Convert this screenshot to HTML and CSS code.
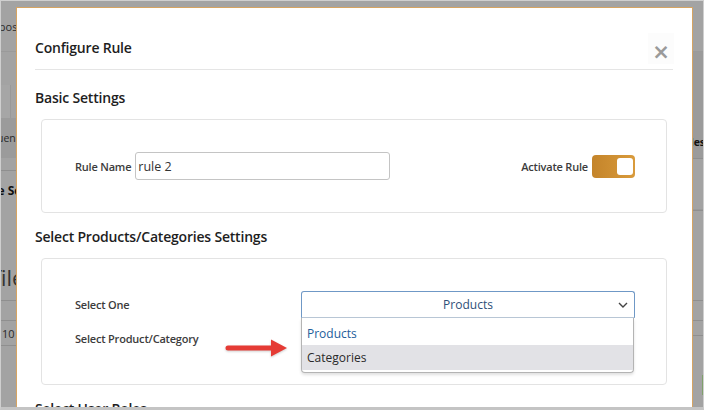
FILE: index.html
```html
<!DOCTYPE html>
<html lang="en">
<head>
<meta charset="utf-8">
<title>Configure Rule</title>
<link rel="stylesheet" href="styles.css">
</head>
<body>
<div class="page">
  <div class="strip strip-left">
    <div class="bg-row h52"><span class="t-purpose">Purpose</span></div>
    <div class="bg-row h33"></div>
    <div class="bg-row h33 split"></div>
    <div class="bg-row h40 dark"><span class="t-freq">Frequency</span></div>
    <div class="bg-row h12"></div>
    <div class="bg-row h40 lined"><b class="t-rule">Rule Settings</b></div>
    <div class="bg-row h90 big"><span class="t-profile">Profile</span></div>
    <div class="bg-row h20 lined"></div>
    <div class="bg-row h25 lined"><span class="t-ten">10</span></div>
    <div class="bg-row h30 lined"></div>
  </div>
  <div class="page-main"></div>
  <div class="strip strip-right">
    <div class="bg-row h52"></div>
    <div class="bg-row h73 dark"></div>
    <div class="bg-row h33 dark"><b class="t-roles">Roles</b></div>
    <div class="bg-row h52 lined"></div>
    <div class="bg-row h90 lined"></div>
    <div class="bg-row h20 lined"></div>
    <div class="bg-row h15 lined"></div>
    <div class="bg-row h40 lined"></div>
    <div class="bg-row h20 green"></div>
  </div>
</div>

<div class="modal">
  <div class="modal-header">
    <h2 class="modal-title">Configure Rule</h2>
    <span class="close">&times;</span>
  </div>

  <h3 class="section-title">Basic Settings</h3>
  <div class="card">
    <div class="basic-row">
      <div class="field">
        <label class="lbl">Rule Name</label>
        <input class="text-input" type="text" value="rule 2">
      </div>
      <div class="field">
        <label class="lbl">Activate Rule</label>
        <span class="toggle"><span class="knob"></span></span>
      </div>
    </div>
  </div>

  <h3 class="section-title">Select Products/Categories Settings</h3>
  <div class="card card-select">
    <div class="form-grid">
      <label class="lbl">Select One</label>
      <div class="select-wrap">
        <div class="select">
          <span class="select-value">Products</span>
          <svg class="chevron" width="10" height="6" viewBox="0 0 10 6"><path d="M1 1 L5 5 L9 1" fill="none" stroke="#444" stroke-width="1.4"/></svg>
        </div>
        <ul class="dropdown">
          <li class="opt opt-selected">Products</li>
          <li class="opt opt-hover">Categories</li>
        </ul>
      </div>
      <label class="lbl">Select Product/Category</label>
      <div class="select-spacer"></div>
    </div>
    <svg class="arrow" width="64" height="20" viewBox="0 0 64 20">
      <path d="M3 7.5 H46 V1.5 L62 10 L46 18.5 V12.5 H3 A2.5 2.5 0 0 1 3 7.5 Z" fill="#e53b35"/>
    </svg>
  </div>

  <h3 class="section-title">Select User Roles</h3>
</div>

<div class="frame"></div>
</body>
</html>
```

FILE: styles.css
```css
* { box-sizing: border-box; }

html, body {
  margin: 0;
  padding: 0;
  width: 704px;
  height: 410px;
  overflow: hidden;
}

body {
  position: relative;
  background: #a3a3a3;
  font-family: "Open Sans", "Noto Sans", sans-serif;
  color: #222;
}

/* dimmed page behind the modal */
.page {
  display: flex;
  height: 410px;
}

.strip {
  display: flex;
  flex-direction: column;
}

.strip-left { width: 16px; }
.strip-right { width: 12px; margin-left: auto; }
.page-main { flex: 1; }

.bg-row {
  display: flex;
  align-items: center;
  white-space: nowrap;
  font-size: 11px;
  color: #2a2a2a;
}

.t-purpose { margin-left: -19px; margin-top: 2px; }
.t-freq { margin-left: -25px; font-size: 10.5px; }
.t-rule { margin-left: -22px; font-size: 12px; }
.t-profile { margin-left: -42px; }
.t-ten { margin-left: 2px; }
.t-roles { margin-left: -15px; font-size: 10.5px; font-weight: 600; }

.h52 { height: 52px; border-bottom: 1px solid #9a9a9a; }
.h33 { height: 33px; }
.h40 { height: 40px; }
.h12 { height: 12px; }
.h90 { height: 90px; }
.h20 { height: 20px; }
.h25 { height: 25px; }
.h30 { height: 30px; }
.h73 { height: 73px; }
.h15 { height: 15px; }

.split { border-right: 1px solid #999; margin-right: 5px; background: #a6a6a6; }
.dark { background: #9b9b9b; }
.lined { border-top: 1px solid #8f8f8f; }
.big { font-size: 22px; align-items: flex-end; padding-bottom: 8px; color: #333; }
.bg-row b { font-weight: 700; color: #111; }
.green { border-right: 2px solid #7fa06b; }

/* modal */
.modal {
  position: absolute;
  left: 16px;
  top: 7px;
  width: 677px;
  height: 420px;
  background: #fff;
  border: 1px solid #d6a462;
  padding: 0 19px 0 18px;
  z-index: 1;
}

.modal-header {
  display: flex;
  align-items: center;
  justify-content: space-between;
  height: 62px;
  padding-top: 18px;
  border-bottom: 1px solid #e5e5e5;
}

.modal-title {
  margin: 0;
  font-size: 14px;
  letter-spacing: -0.2px;
  font-weight: 600;
  line-height: 20px;
  color: #1e1e1e;
}

.close {
  display: flex;
  align-items: center;
  justify-content: center;
  width: 26px;
  height: 31px;
  margin-right: -1px;
  margin-top: 1px;
  padding-top: 8px;
  background: #fcfcfc;
  color: #9a9a9a;
  font-size: 21px;
  font-weight: 600;
  line-height: 1;
  font-family: "DejaVu Sans", sans-serif;
}

.section-title {
  margin: 18px 0 11px;
  font-size: 14px;
  letter-spacing: -0.2px;
  font-weight: 600;
  line-height: 20px;
  color: #1e1e1e;
}

.card {
  position: relative;
  margin: 0 6px;
  border: 1px solid #e3e3e3;
  border-radius: 4px;
  padding: 32px 31px 32px 33px;
}

.card + .section-title { margin-top: 14px; }

.basic-row {
  display: flex;
  align-items: center;
  justify-content: space-between;
  height: 28px;
}

.field {
  display: flex;
  align-items: center;
  gap: 4px;
}

.lbl {
  font-size: 11px;
  letter-spacing: -0.2px;
  font-weight: 600;
  color: #3c3c3c;
  white-space: nowrap;
}

.text-input {
  width: 255px;
  height: 28px;
  border: 1px solid #c4c4c4;
  border-radius: 3px;
  padding: 0 2px;
  font-family: "Open Sans", "Noto Sans", sans-serif;
  font-size: 12.5px;
  color: #333;
  outline: none;
}

.toggle {
  display: flex;
  align-items: center;
  justify-content: flex-end;
  width: 43px;
  height: 23px;
  padding-right: 2px;
  border-radius: 4px;
  background: linear-gradient(90deg, #c4842a 0%, #d99b3c 100%);
}

.knob {
  width: 16px;
  height: 17px;
  background: #fff;
  border-radius: 3px;
}

.form-grid {
  display: grid;
  grid-template-columns: 226px 334px;
  grid-template-rows: 27px 27px;
  row-gap: 7px;
  align-items: center;
}

.select-wrap {
  position: relative;
  height: 27px;
}

.select {
  position: relative;
  display: flex;
  align-items: center;
  justify-content: center;
  height: 27px;
  border: 1px solid #6f98c6;
  border-bottom-color: #b9c7d6;
  border-radius: 3px 3px 0 0;
  font-size: 12px;
  color: #2e4f78;
}

.chevron {
  position: absolute;
  right: 6px;
  top: 10px;
}

.dropdown {
  position: absolute;
  left: 0;
  top: 27px;
  width: 333px;
  margin: 0;
  padding: 0 0 2px;
  list-style: none;
  background: #fff;
  border: 1px solid #b4b4b4;
  border-top: none;
  border-radius: 0 0 4px 4px;
  box-shadow: 0 2px 3px rgba(0, 0, 0, 0.12);
  z-index: 2;
}

.opt {
  display: flex;
  align-items: center;
  padding: 0 5px;
  font-size: 12px;
}

.opt-selected {
  height: 27px;
  padding-top: 3px;
  color: #235e9b;
}

.opt-hover {
  height: 25px;
  background: #e2e2e6;
  color: #2a2a2a;
}

.select-spacer { height: 27px; }

.arrow {
  position: absolute;
  left: 183px;
  top: 79px;
  filter: drop-shadow(0 1px 1px rgba(0, 0, 0, 0.2));
}

.frame {
  position: absolute;
  inset: 0;
  border: 1px solid #cfcfcf;
  border-bottom: 3px solid #c4c4c4;
  pointer-events: none;
  z-index: 3;
}
```
